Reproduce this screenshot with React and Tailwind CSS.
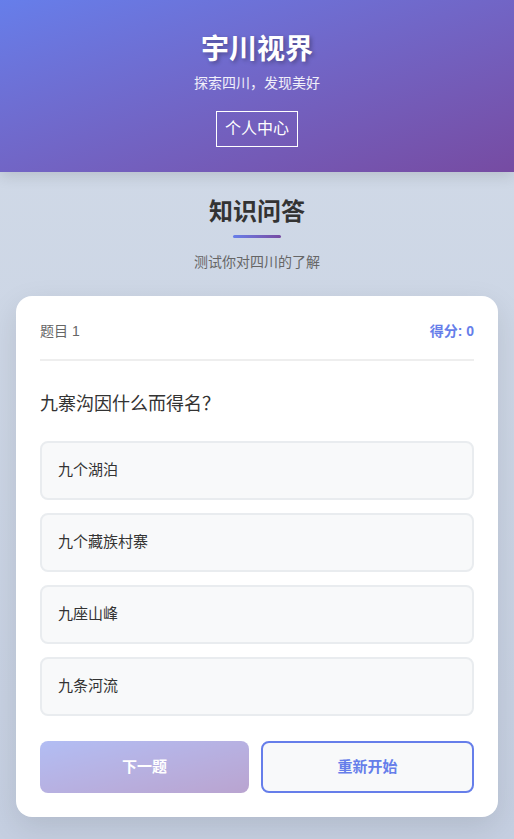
import React from "react";

const options = ["九个湖泊", "九个藏族村寨", "九座山峰", "九条河流"];

const App = () => {
  return (
    <div
      className="min-h-[839px] bg-gradient-to-b from-[#d2dbe8] to-[#c5cfe1] pb-[22px]"
      style={{ fontFamily: '"Liberation Sans", "Noto Sans CJK SC", sans-serif' }}
    >
      {/* 顶部 */}
      <header className="h-[172px] bg-gradient-to-br from-[#667eea] to-[#764ba2] text-white flex flex-col items-center shadow-[0_4px_14px_rgba(0,0,0,0.12)] relative">
        <h1 className="mt-[30px] text-[28px] font-bold leading-[40px] [text-shadow:2px_2px_4px_rgba(0,0,0,0.3)]">
          宇川视界
        </h1>
        <p className="mt-[3px] text-[14px] leading-[20px] text-white/90">
          探索四川，发现美好
        </p>
        <button className="mt-[18px] h-[36px] px-[8px] border border-white text-[16px] leading-[24px]">
          个人中心
        </button>
      </header>

      <main className="px-4">
        {/* 标题 */}
        <div className="flex flex-col items-center pt-[23px]">
          <h2 className="text-[24px] font-bold leading-[34px] text-[#333]">
            知识问答
          </h2>
          <div className="mt-[6px] w-[48px] h-[3px] rounded-full bg-gradient-to-r from-[#667eea] to-[#764ba2]" />
          <p className="mt-[14px] text-[14px] leading-[20px] text-[#666]">
            测试你对四川的了解
          </p>
        </div>

        {/* 卡片 */}
        <div className="mt-[24px] bg-white rounded-[16px] shadow-[0_10px_30px_rgba(0,0,0,0.1)] p-6">
          <div className="flex justify-between items-center pt-[1px] pb-[18px] border-b-2 border-[#eeeeee] text-[14px] leading-[20px]">
            <span className="text-[#666]">题目 1</span>
            <span className="font-bold text-[#667eea]">得分: 0</span>
          </div>

          <p className="mt-[30px] text-[18px] leading-[26px] text-[#333]">
            九寨沟因什么而得名？
          </p>

          <div className="mt-[24px] flex flex-col gap-[13px]">
            {options.map((opt, idx) => (
              <div
                key={idx}
                className="h-[59px] flex items-center px-[16px] bg-[#f8f9fa] border-2 border-[#e9ecef] rounded-[8px] text-[15px] text-[#333]"
              >
                {opt}
              </div>
            ))}
          </div>

          <div className="mt-[25px] flex gap-[12px]">
            <button className="w-[209px] h-[52px] rounded-[8px] bg-gradient-to-br from-[#667eea] to-[#764ba2] opacity-50 text-white font-bold text-[15px]">
              下一题
            </button>
            <button className="flex-1 h-[52px] rounded-[8px] border-2 border-[#667eea] bg-[#f8f9fa] text-[#667eea] font-bold text-[15px]">
              重新开始
            </button>
          </div>
        </div>
      </main>
    </div>
  );
};

export default App;
